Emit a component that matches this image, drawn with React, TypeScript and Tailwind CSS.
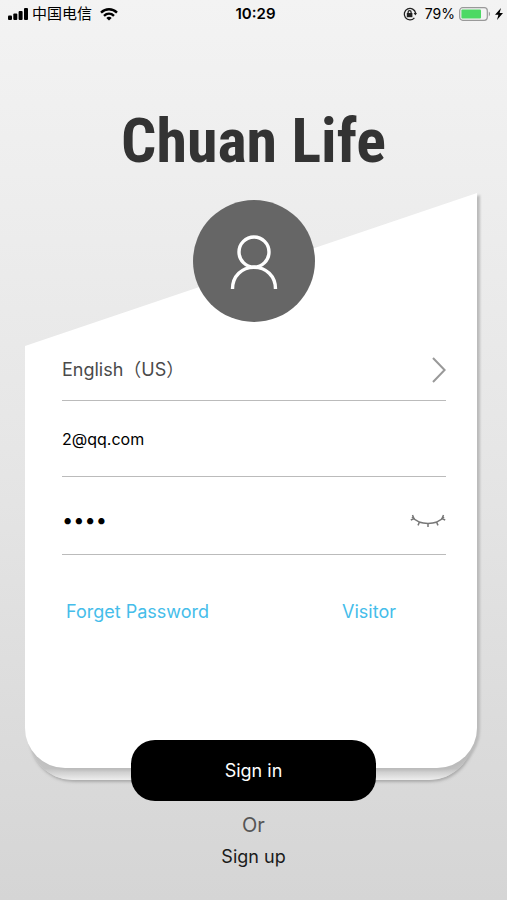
import React, { useState } from 'react';

const StatusBar = () => (
  <header className="grid grid-cols-3 items-center h-7 pl-2 pr-1 text-sm text-black">
    <div className="flex items-center gap-1">
      <svg width="20" height="12" viewBox="0 0 20 12" aria-hidden="true">
        <rect x="0" y="7.5" width="4" height="4.5" rx="1" />
        <rect x="5.3" y="5.5" width="4" height="6.5" rx="1" />
        <rect x="10.6" y="3" width="4" height="9" rx="1" />
        <rect x="16" y="0" width="4" height="12" rx="1" />
      </svg>
      <span className="text-[15px] leading-5 whitespace-nowrap">中国电信</span>
      <svg className="ml-1" width="18" height="13" viewBox="0 0 18 13" fill="none" stroke="#000" strokeWidth="2.4" aria-hidden="true">
        <path d="M1 4.6C5.6 0.2 12.4 0.2 17 4.6" />
        <path d="M4 7.8C6.9 5.1 11.1 5.1 14 7.8" />
        <path d="M9 12.6L6.3 9.9C7.8 8.5 10.2 8.5 11.7 9.9Z" fill="#000" stroke="none" />
      </svg>
    </div>
    <span className="text-center font-semibold text-[15px]">10:29</span>
    <div className="flex items-center justify-end">
      <svg className="mr-2" width="14" height="14" viewBox="0 0 14 14" fill="none" stroke="#222" strokeWidth="1.3" aria-hidden="true">
        <path d="M11.4 10.8A5.7 5.7 0 1 1 12.6 6.2" />
        <path d="M10.6 6H14L12.4 8.6Z" fill="#222" stroke="none" />
        <rect x="3.8" y="6" width="5.6" height="4.2" fill="#222" stroke="none" />
        <path d="M5.1 6.4V5.2A1.5 1.5 0 0 1 8.1 5.2V6.4" />
      </svg>
      <span className="mr-1">79%</span>
      <svg width="32" height="14" viewBox="0 0 32 14" aria-hidden="true">
        <rect x="0.7" y="0.7" width="27.6" height="12.6" rx="3" fill="none" stroke="#999" strokeWidth="1.2" />
        <rect x="2.4" y="2.4" width="19.6" height="9.2" rx="1" fill="#4cd964" />
        <path d="M29.8 4.6C31.5 5.4 31.5 8.6 29.8 9.4Z" fill="#999" />
      </svg>
      <svg className="ml-1" width="8" height="12" viewBox="0 0 8 12" aria-hidden="true">
        <path d="M6 0L0 6.8H3.4L2 12L8 4.9H4.6Z" />
      </svg>
    </div>
  </header>
);

const App = () => {
  const [language, setLanguage] = useState('en');
  const [email, setEmail] = useState('2@qq.com');
  const [password, setPassword] = useState('1234');
  const [showPassword, setShowPassword] = useState(false);

  const handleSubmit = (e: React.FormEvent) => {
    e.preventDefault();
  };

  return (
    <div className="min-h-screen bg-linear-to-b from-[#f3f3f3] via-[#e6e6e6] to-[#d5d5d5] font-['Inter','Noto_Sans_CJK_SC',sans-serif]">
      <StatusBar />

      <h1 className="pt-20 pb-5 text-center text-[62px] leading-[65px] font-bold text-[#333] font-['Roboto_Condensed','Roboto',sans-serif]">
        Chuan Life
      </h1>

      <form onSubmit={handleSubmit}>
        <div className="relative isolate ml-[25px] mr-[30px] pt-[7px] pb-[142px] pl-[37px] pr-[31px]">
          {/* stacked sheets behind the fields */}
          <div className="absolute -z-10 inset-x-1 -bottom-3 h-24 rounded-b-[44px] bg-linear-to-b from-[#c2c2c2] from-88% to-[#eee] shadow-[1px_2px_3px_#aaa]" />
          <div className="absolute -z-10 inset-0 drop-shadow-[3px_2px_1px_#bbb]">
            <div className="h-full bg-white rounded-b-[40px] [clip-path:polygon(0_153px,100%_0,100%_100%,0_100%)]" />
          </div>

          <div className="flex justify-center items-center mx-auto pt-1 size-[122px] rounded-full bg-[#666]">
            <svg width="50" height="56" viewBox="0 0 50 56" fill="none" stroke="#fff" strokeWidth="3.4" aria-hidden="true">
              <circle cx="25" cy="17" r="15" />
              <path d="M3.5 54C3.5 41 13 32.4 25 32.4S46.5 41 46.5 54" />
            </svg>
          </div>

          <div className="flex items-center mt-[18px] h-[61px] border-b border-[#bbb]">
            <select
              aria-label="Language"
              value={language}
              onChange={(e) => setLanguage(e.target.value)}
              className="flex-1 appearance-none bg-transparent text-lg text-[#4a4a4a] focus:outline-none"
            >
              <option value="en">English（US）</option>
              <option value="zh">简体中文</option>
            </select>
            <svg width="14" height="26" viewBox="0 0 14 26" fill="none" stroke="#999" strokeWidth="2" aria-hidden="true">
              <path d="M1 1L12.6 13L1 25" />
            </svg>
          </div>

          <div className="flex items-center h-[76px] border-b border-[#bbb]">
            <input
              type="email"
              aria-label="Email"
              value={email}
              onChange={(e) => setEmail(e.target.value)}
              className="flex-1 min-w-0 bg-transparent text-base text-black focus:outline-none"
            />
          </div>

          <div className="flex items-center pt-2 h-[78px] border-b border-[#bbb]">
            <input
              type={showPassword ? 'text' : 'password'}
              aria-label="Password"
              value={password}
              onChange={(e) => setPassword(e.target.value)}
              className="flex-1 min-w-0 bg-transparent text-xl text-black focus:outline-none"
            />
            <button type="button" aria-label="Show password" onClick={() => setShowPassword(!showPassword)}>
              <svg width="36" height="14" viewBox="0 0 36 14" fill="none" stroke="#777" strokeWidth="1.5">
                <path d="M2 4C10 12.6 26 12.6 34 4" />
                <path d="M2.5 2L4 5.6L0.8 7M33.5 2L32 5.6L35.2 7M9.5 9L8 12.4M18 10.4V14M26.5 9L28 12.4" />
              </svg>
            </button>
          </div>

          <div className="flex justify-between pt-[43px] pl-1 pr-[50px] text-lg text-[#45bdea]">
            <a href="#forget">Forget Password</a>
            <a href="#visitor">Visitor</a>
          </div>
        </div>

        <div className="relative flex flex-col items-center -mt-7">
          <button type="submit" className="w-[245px] h-[61px] rounded-3xl bg-black text-lg text-white">
            Sign in
          </button>
          <p className="pt-2 text-xl leading-8 text-[#555]">Or</p>
          <a href="#signup" className="text-lg leading-8 text-[#1a1a1a]">Sign up</a>
        </div>
      </form>
    </div>
  );
};

export default App;
